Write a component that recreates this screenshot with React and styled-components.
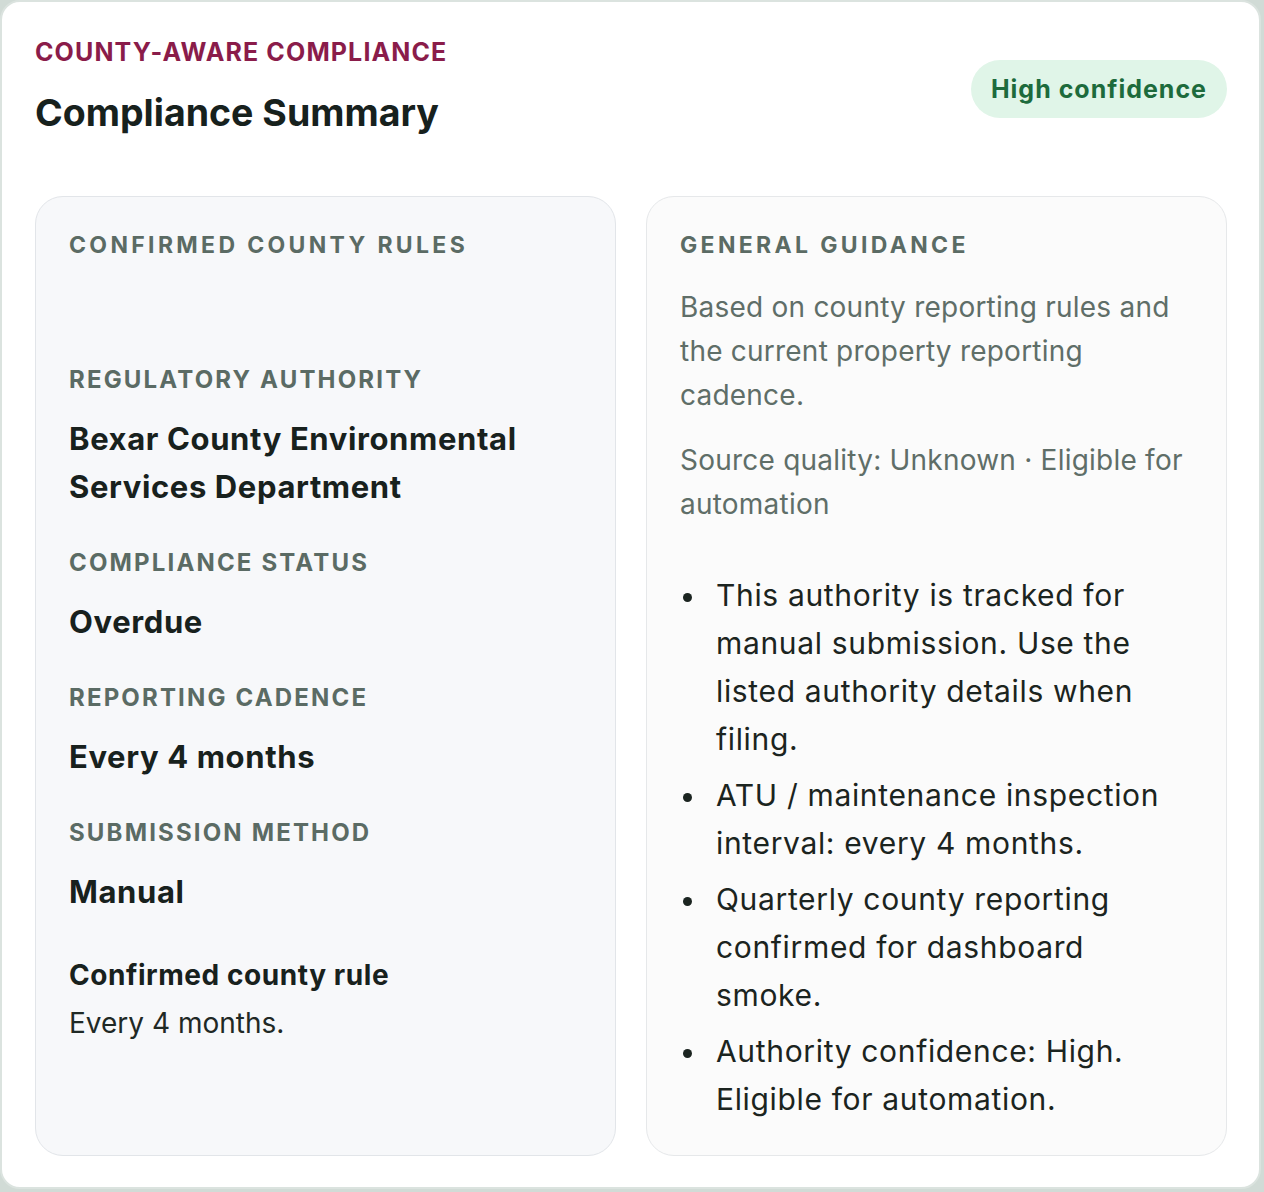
import React from "react";
import styled, { createGlobalStyle } from "styled-components";

const GlobalStyle = createGlobalStyle`
  * {
    box-sizing: border-box;
  }
  body {
    margin: 0;
    background: #d1dbd6;
    font-family: Inter, "Noto Sans", "Liberation Sans", sans-serif;
    color: #18211d;
  }
`;

const guidance = [
  "This authority is tracked for manual submission. Use the listed authority details when filing.",
  "ATU / maintenance inspection interval: every 4 months.",
  "Quarterly county reporting confirmed for dashboard smoke.",
  "Authority confidence: High. Eligible for automation.",
];

const fields = [
  { label: "Regulatory authority", value: "Bexar County Environmental Services Department" },
  { label: "Compliance status", value: "Overdue" },
  { label: "Reporting cadence", value: "Every 4 months" },
  { label: "Submission method", value: "Manual" },
];

const App = () => {
  return (
    <>
      <GlobalStyle />
      <Card>
        <Header>
          <div>
            <Eyebrow>County-aware compliance</Eyebrow>
            <Title>Compliance Summary</Title>
          </div>
          <Badge>High confidence</Badge>
        </Header>
        <Columns>
          <Panel>
            <PanelHeading $spaced>Confirmed county rules</PanelHeading>
            <FieldList>
              {fields.map((f) => (
                <Field key={f.label}>
                  <FieldLabel>{f.label}</FieldLabel>
                  <FieldValue>{f.value}</FieldValue>
                </Field>
              ))}
              <RuleNote>
                <RuleTitle>Confirmed county rule</RuleTitle>
                <RuleText>Every 4 months.</RuleText>
              </RuleNote>
            </FieldList>
          </Panel>
          <Panel $muted>
            <PanelHeading>General guidance</PanelHeading>
            <Muted>
              Based on county reporting rules and the current property reporting
              cadence.
            </Muted>
            <Muted $gap>Source quality: Unknown · Eligible for automation</Muted>
            <Bullets>
              {guidance.map((g) => (
                <BulletItem key={g}>{g}</BulletItem>
              ))}
            </Bullets>
          </Panel>
        </Columns>
      </Card>
    </>
  );
};

export default App;

const Card = styled.div`
  width: 1261px;
  background: #ffffff;
  border: 2px solid #dbe3df;
  border-radius: 20px;
  padding: 35px 32px 31px 33px;
`;

const Header = styled.div`
  display: flex;
  justify-content: space-between;
  align-items: center;
`;

const Eyebrow = styled.div`
  font-size: 25px;
  line-height: 1.2;
  font-weight: 700;
  letter-spacing: 0.045em;
  text-transform: uppercase;
  color: #8a1c4a;
`;

const Title = styled.h1`
  margin: 23px 0 0;
  font-size: 37.5px;
  line-height: 1.2;
  font-weight: 700;
  color: #17211d;
`;

const Badge = styled.span`
  display: inline-flex;
  align-items: center;
  height: 58px;
  margin-top: 5px;
  padding: 0 20px;
  border-radius: 29px;
  background: #e0f5e8;
  color: #1d6b3c;
  font-size: 25px;
  font-weight: 700;
  letter-spacing: 0.04em;
`;

const Columns = styled.div`
  display: grid;
  grid-template-columns: 1fr 1fr;
  gap: 30px;
  margin-top: 61px;
`;

const Panel = styled.section`
  display: flex;
  flex-direction: column;
  padding: 34px 33px 32px;
  border: 1.5px solid ${(p) => (p.$muted ? "#e6e8ea" : "#e2e5e9")};
  border-radius: 28px;
  background: ${(p) => (p.$muted ? "#fbfbfb" : "#f7f8fa")};
`;

const PanelHeading = styled.h2`
  margin: 0 0 ${(p) => (p.$spaced ? "105px" : "25px")};
  font-size: 23px;
  line-height: 29px;
  font-weight: 700;
  letter-spacing: 0.145em;
  text-transform: uppercase;
  color: #5b6b64;
`;

const FieldList = styled.div`
  display: flex;
  flex-direction: column;
  gap: 37px;
`;

const Field = styled.div`
  display: flex;
  flex-direction: column;
  gap: 21px;
`;

const FieldLabel = styled.div`
  font-size: 24px;
  line-height: 29px;
  font-weight: 700;
  letter-spacing: 0.09em;
  text-transform: uppercase;
  color: #5b6b64;
`;

const FieldValue = styled.div`
  font-size: 31px;
  line-height: 48px;
  font-weight: 700;
  letter-spacing: 0.02em;
  color: #18211d;
`;

const RuleNote = styled.div`
  display: flex;
  flex-direction: column;
  gap: 4px;
`;

const RuleTitle = styled.div`
  font-size: 28px;
  line-height: 44px;
  font-weight: 700;
  letter-spacing: 0.02em;
  color: #18211d;
`;

const RuleText = styled.div`
  font-size: 28px;
  line-height: 44px;
  color: #1f2925;
`;

const Muted = styled.p`
  margin: ${(p) => (p.$gap ? "21px" : "0")} 0 0;
  font-size: 28px;
  line-height: 44px;
  letter-spacing: 0.008em;
  color: #5f6e68;
`;

const Bullets = styled.ul`
  margin: 45px 0 0;
  padding: 0 0 0 36px;
  list-style: none;
  font-size: 30px;
  line-height: 48px;
  letter-spacing: 0.022em;
  color: #1b2420;
`;

const BulletItem = styled.li`
  position: relative;

  & + & {
    margin-top: 8px;
  }

  &::before {
    content: "";
    position: absolute;
    left: -33px;
    top: 22px;
    width: 9px;
    height: 9px;
    border-radius: 50%;
    background: #1b2420;
  }
`;
